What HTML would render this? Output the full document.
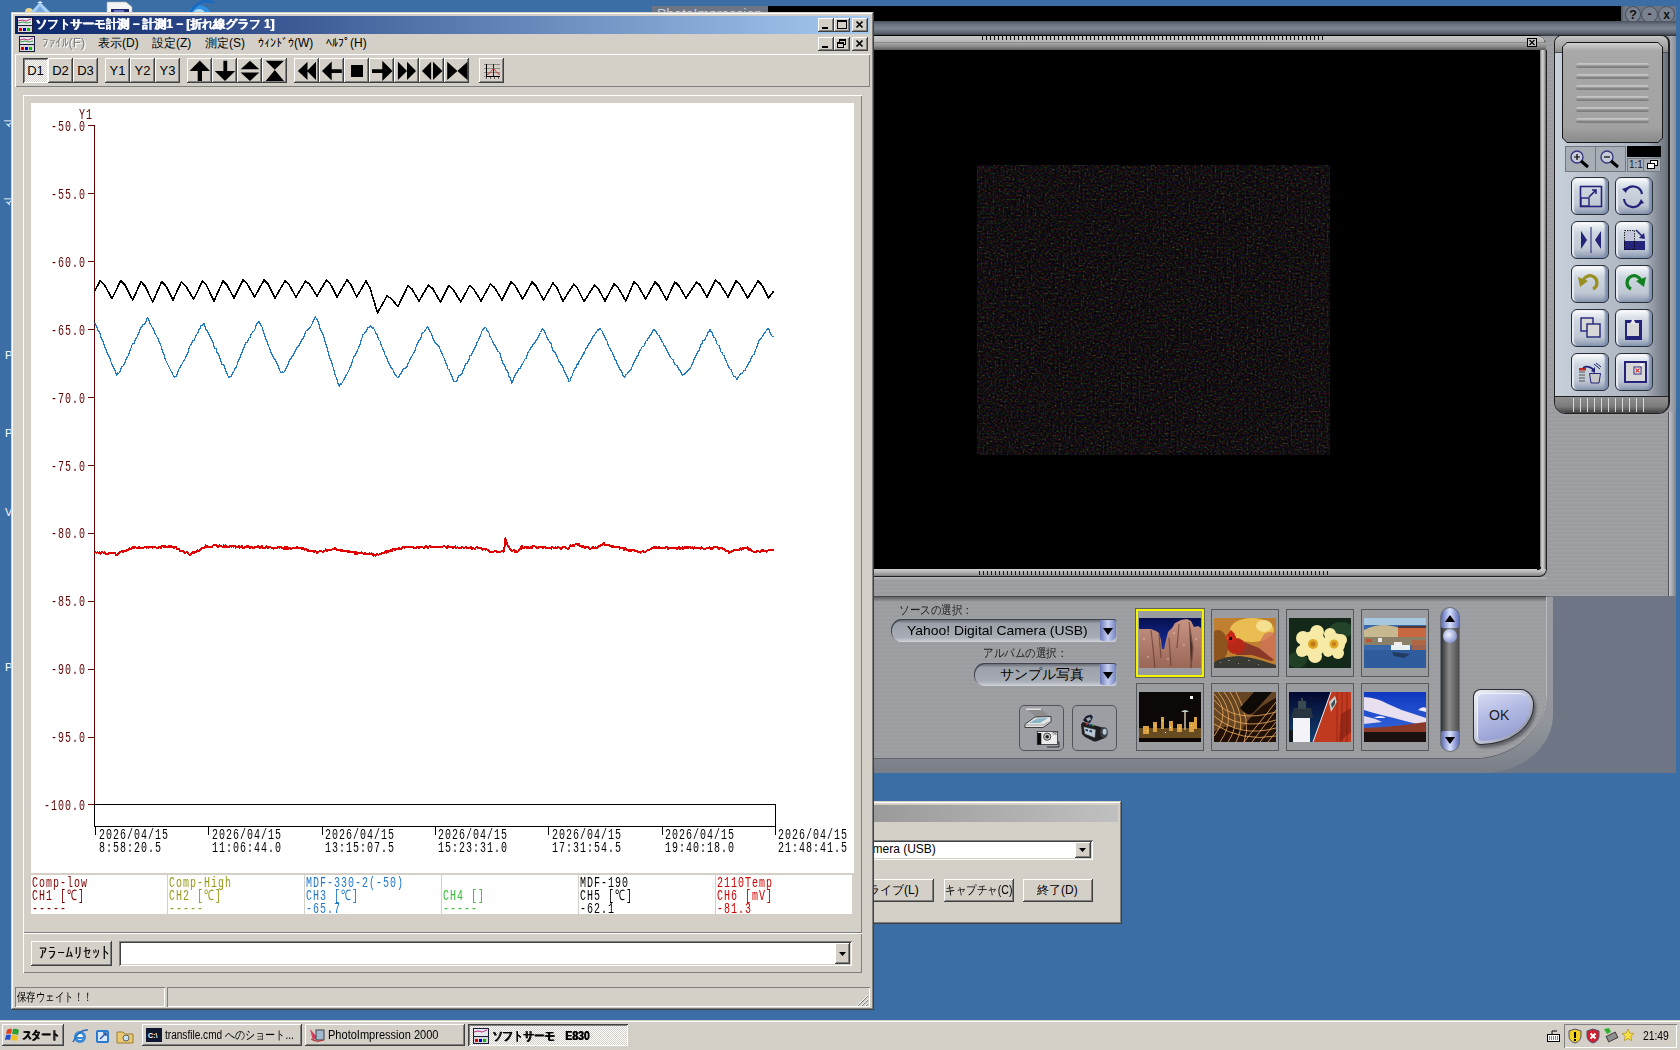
<!DOCTYPE html>
<html><head><meta charset="utf-8">
<style>
*{box-sizing:border-box}
html,body{margin:0;padding:0}
body{width:1680px;height:1050px;overflow:hidden;background:#3A6EA5;position:relative;font-family:"Liberation Sans",sans-serif;font-size:12px;color:#000}
div,span,svg{position:absolute}
.face{background:#D4D0C8}
.rz{background:#D4D0C8;box-shadow:inset -1px -1px #404040,inset 1px 1px #fff,inset -2px -2px #808080}
.rz2{background:#D4D0C8;box-shadow:inset -1px -1px #404040,inset 1px 1px #D4D0C8,inset -2px -2px #808080,inset 2px 2px #fff}
.pz{background:#D4D0C8;box-shadow:inset 1px 1px #404040,inset -1px -1px #fff,inset 2px 2px #808080,inset -2px -2px #D4D0C8}
.thin{box-shadow:inset 1px 1px #fff,inset -1px -1px #808080}
.sk{box-shadow:inset 1px 1px #808080,inset -1px -1px #fff}
.sunk{box-shadow:inset 1px 1px #808080,inset -1px -1px #fff,inset 2px 2px #404040,inset -2px -2px #D4D0C8}
.ml{font-family:"Liberation Mono",monospace;font-size:10px;letter-spacing:1px;line-height:8.966px;white-space:pre;transform:scaleY(1.45);transform-origin:0 0}
.mono{font-family:"Liberation Mono",monospace}
.t{white-space:nowrap;line-height:1}
.tb{width:25px;height:25px;text-align:center;line-height:25px;font-size:13px}
.tb svg{left:0;top:0}
.wb{width:16px;height:14px}
.wb svg{left:0;top:0}
</style></head><body>
<!-- desktop icon fragments -->
<svg style="left:20px;top:0" width="36" height="14" viewBox="0 0 36 14"><circle cx="9" cy="12" r="4" fill="#e8d890"/><path d="M11 12 L20 2 L30 12 Z" fill="#a8d0f8"/><path d="M17 3 L20 1 L23 3 Z" fill="#e8f4ff"/><path d="M15 12 L20 6 L25 12 Z" fill="#78a8e0"/></svg>
<svg style="left:106px;top:1px" width="28" height="12" viewBox="0 0 28 12"><path d="M1 1 H20 L26 6 V12 H1 Z" fill="#f4f4f4" stroke="#b0b0b0" stroke-width="0.6"/><rect x="5" y="8" width="18" height="4" fill="#20286a"/><rect x="8" y="9" width="10" height="2" fill="#6878c8"/></svg>
<svg style="left:184px;top:0" width="34" height="14" viewBox="0 0 34 14"><ellipse cx="15" cy="14" rx="11" ry="9" fill="#2e90e0"/><ellipse cx="15" cy="14" rx="6" ry="5" fill="#a8d8ff"/><path d="M6 12 Q18 -4 30 3" stroke="#1a6ac0" stroke-width="2.5" fill="none"/></svg>
<div class="t" style="left:3px;top:118px;color:#fff;font-size:11px">マ</div>
<div class="t" style="left:3px;top:196px;color:#fff;font-size:11px">マ</div>
<div class="t" style="left:5px;top:350px;color:#fff;font-size:11px">P</div>
<div class="t" style="left:5px;top:428px;color:#fff;font-size:11px">P</div>
<div class="t" style="left:5px;top:507px;color:#fff;font-size:11px">V</div>
<div class="t" style="left:5px;top:662px;color:#fff;font-size:11px">P</div>

<!-- PhotoImpression window -->
<div style="left:652px;top:6px;width:1024px;height:767px;background:#6e7585"></div>
<div class="t" style="left:657px;top:7px;color:#c8ccd4;font-size:14px">PhotoImpression</div>
<div style="left:768px;top:6px;width:855px;height:16px;background:#000;border-right:2px solid #5a6270;border-bottom:1px solid #5a6270"></div>
<!-- round title buttons -->
<div style="left:1625px;top:6px;width:16px;height:17px;border-radius:50%;border:1px solid #4a5060;background:#7a8290;color:#111;font-size:13px;font-weight:bold;text-align:center;line-height:16px">?</div>
<div style="left:1641px;top:6px;width:17px;height:17px;border-radius:50%;border:1px solid #4a5060;background:#7a8290;color:#111;font-size:12px;font-weight:bold;text-align:center;line-height:15px">-</div>
<div style="left:1658px;top:6px;width:17px;height:17px;border-radius:50%;border:1px solid #4a5060;background:#7a8290;color:#111;font-size:12px;font-weight:bold;text-align:center;line-height:16px">x</div>
<!-- upper body -->
<div style="left:652px;top:22px;width:1024px;height:574px;background:repeating-linear-gradient(to bottom,#9ea0a4 0 2px,#9a9ca0 2px 4px)"></div>
<div style="left:652px;top:21px;width:1024px;height:15px;background:linear-gradient(to bottom,#4a5260 0,#6c7582 25%,#7c8591 50%,#5c6470 80%,#30343c 100%)"></div>

<!-- preview panel -->
<div style="left:652px;top:35px;width:894px;height:542px;background:#000;border-radius:0 10px 10px 0"></div>
<div style="left:652px;top:36px;width:893px;height:7px;background:linear-gradient(to bottom,#c8c8c8,#b4b4b4);border-radius:0 9px 0 0"></div>
<div style="left:652px;top:42px;width:894px;height:1px;background:#8a8a8a"></div>
<div style="left:652px;top:43px;width:894px;height:7px;background:linear-gradient(to bottom,#a8a8a8,#8a8a8a 50%,#5a5a5a)"></div>
<div style="left:982px;top:36px;width:344px;height:4px;background:repeating-linear-gradient(to right,#111 0 1px,transparent 1px 4px)"></div>
<div style="left:1527px;top:38px;width:10px;height:9px;border:1px solid #000;background:#c8c8c8"><svg style="left:0;top:0" width="8" height="7"><path d="M1.5 1 L6.5 6 M6.5 1 L1.5 6" stroke="#000" stroke-width="1.2"/></svg></div>
<div style="left:1540px;top:50px;width:7px;height:520px;background:linear-gradient(to right,#707070,#d8d8d8 35%,#b0b0b0 70%,#606060);border-right:1px solid #202020"></div>
<div style="left:652px;top:569px;width:895px;height:8px;background:linear-gradient(to bottom,#d0d0d0,#b0b0b0 50%,#808080);border-right:1px solid #202020;border-bottom:1px solid #202020;border-radius:0 0 8px 0"></div><div style="left:1537px;top:567px;width:4px;height:3px;background:#000;border-radius:0 0 3px 0"></div>
<div style="left:979px;top:571px;width:350px;height:4px;background:repeating-linear-gradient(to right,#111 0 1px,transparent 1px 4px)"></div>
<svg style="left:977px;top:165px" width="353" height="290"><filter id="nz" x="0" y="0" width="100%" height="100%" color-interpolation-filters="sRGB"><feTurbulence type="fractalNoise" baseFrequency="0.5" numOctaves="2" seed="3"/><feComponentTransfer><feFuncR type="gamma" amplitude="0.75" exponent="3.5" offset="0"/><feFuncG type="gamma" amplitude="0.6" exponent="3.5" offset="0"/><feFuncB type="gamma" amplitude="0.7" exponent="3.5" offset="0"/><feFuncA type="linear" slope="0" intercept="1"/></feComponentTransfer></filter><rect width="353" height="290" fill="#000"/><rect width="353" height="290" filter="url(#nz)"/></svg>
<div style="left:652px;top:596px;width:894px;height:1px;background:#45474b"></div>
<div style="left:652px;top:577px;width:894px;height:3px;background:linear-gradient(to bottom,#b4b6ba,transparent)"></div>

<!-- bottom panel -->
<div style="left:652px;top:597px;width:901px;height:176px;background:linear-gradient(to bottom,#9a9ca2,#92969c 70%,#7a7e88);border-radius:0 0 70px 0/0 0 58px 0"></div>
<div style="left:652px;top:597px;width:894px;height:161px;background:repeating-linear-gradient(to bottom,#9ea0a4 0 2px,#9a9ca0 2px 4px);border-radius:0 0 72px 0/0 0 65px 0;box-shadow:0 1px #60646a,1px 0 #b8bac0"></div>
<div style="left:652px;top:597px;width:894px;height:5px;background:linear-gradient(to bottom,#606266,transparent)"></div>

<!-- source selection -->
<div class="t" style="left:899px;top:604px;color:#202020;font-size:12px;transform:scaleX(0.88);transform-origin:0 0">ソースの選択：</div>
<div style="left:891px;top:619px;width:226px;height:23px;border-radius:11px 4px 4px 11px;background:linear-gradient(to bottom,#5a5e66,#9ca0a8 20%,#a8acb4 80%,#d0d4da);box-shadow:inset 1px 1px #404450"></div>
<div class="t" style="left:907px;top:624px;color:#000;font-size:13px;transform:scaleX(1.07);transform-origin:0 0">Yahoo! Digital Camera (USB)</div>
<div style="left:1100px;top:620px;width:16px;height:21px;border-radius:0 3px 6px 3px;background:linear-gradient(to right,#6a78b8,#c8d0f0 50%,#7080c0)"><svg style="left:0;top:0" width="16" height="21"><path d="M3 8 H13 L8 15 Z" fill="#000"/></svg></div>
<div class="t" style="left:983px;top:647px;color:#202020;font-size:12px;transform:scaleX(0.875);transform-origin:0 0">アルバムの選択：</div>
<div style="left:974px;top:663px;width:143px;height:23px;border-radius:11px 4px 4px 11px;background:linear-gradient(to bottom,#5a5e66,#9ca0a8 20%,#a8acb4 80%,#d0d4da);box-shadow:inset 1px 1px #404450"></div>
<div class="t" style="left:1000px;top:667px;color:#000;font-size:14px">サンプル写真</div>
<div style="left:1100px;top:664px;width:16px;height:21px;border-radius:0 3px 6px 3px;background:linear-gradient(to right,#6a78b8,#c8d0f0 50%,#7080c0)"><svg style="left:0;top:0" width="16" height="21"><path d="M3 8 H13 L8 15 Z" fill="#000"/></svg></div>
<!-- scanner / camcorder buttons -->
<div style="left:1019px;top:705px;width:45px;height:46px;border:1px solid #50545a;border-radius:5px;background:#9c9ea4"></div>
<svg style="left:1022px;top:708px" width="40" height="42" viewBox="0 0 40 42"><path d="M4 1.2 H19 L28.7 8.9 H14.8 Z" fill="#8c8c8c"/><path d="M4 1.2 H19" stroke="#f4f4f4" stroke-width="1.2"/><path d="M3 16.3 L13 9 L29 8.5 V14 L21 19.5 H3 Z" fill="#e4e4e4" stroke="#202020" stroke-width="0.8"/><path d="M7 15 L15 10.5 L26 10 L18 15 Z" fill="#8ab8c8"/><path d="M3 17 H21 L29 13" stroke="#909090" stroke-width="0.8" fill="none"/><rect x="15.3" y="23.5" width="20.3" height="13" fill="#ececec" stroke="#303030" stroke-width="0.8"/><rect x="15.3" y="25" width="4" height="11.6" fill="#0a0a0a"/><circle cx="25.2" cy="28.7" r="3.6" fill="#d0d0d0" stroke="#202020" stroke-width="0.8"/><circle cx="25.2" cy="28.7" r="1.8" fill="#202020"/><rect x="31" y="24.5" width="1.5" height="2" fill="#fff" stroke="#505050" stroke-width="0.5"/><rect x="33.5" y="24.5" width="1.5" height="2" fill="#fff" stroke="#505050" stroke-width="0.5"/><path d="M35.6 34 H37 V39 H25" stroke="#202020" stroke-width="0.9" fill="none"/></svg>
<div style="left:1072px;top:705px;width:45px;height:46px;border:1px solid #50545a;border-radius:5px;background:#9c9ea4"></div>
<svg style="left:1077px;top:712px" width="36" height="32" viewBox="0 0 36 32"><path d="M4 12 L6 10 L20 14 L27 16 L28 26 L19 29.5 L17 29.5 L8 25 L5 22 Z" fill="#1e1e1e"/><path d="M6.5 14.5 L19 17.5 L18 26 L7.5 22 Z" fill="#b8c4d0" stroke="#202020" stroke-width="0.6"/><path d="M8.5 17 L11 17.6 L11 19.4 L8.5 18.8 Z M12.5 18 L15 18.6 L15 20.4 L12.5 19.8 Z" fill="#203a70"/><ellipse cx="27" cy="20.5" rx="3.8" ry="5.5" fill="#3a4048"/><ellipse cx="27.6" cy="19.8" rx="2" ry="3" fill="#b8c8d8"/><path d="M6 8 L9 4 L14 2.5 L16 5 L13 11 L8 10 Z" fill="#1a2030"/><path d="M9 6.5 L13 5 L14 7.5 L11 9.5 Z" fill="#a0a8b0"/><circle cx="10" cy="12" r="1" fill="#d03030"/><circle cx="13" cy="12.8" r="1" fill="#3060d0"/><circle cx="16" cy="13.6" r="1" fill="#30a030"/></svg>
<!-- thumbnails -->
<div style="left:1136px;top:609px;width:68px;height:68px;border:2px solid #f4f400;background:#9a9ca0;box-shadow:0 0 0 1px #606458"></div>
<svg style="left:1139px;top:618px" width="62" height="50" viewBox="0 0 62 50"><defs><linearGradient id="rk" x1="0" y1="0" x2="0" y2="1"><stop offset="0" stop-color="#c89484"/><stop offset="1" stop-color="#9a6656"/></linearGradient><linearGradient id="sk1" x1="0" y1="0" x2="0" y2="1"><stop offset="0" stop-color="#061050"/><stop offset="1" stop-color="#1830a0"/></linearGradient></defs><rect width="62" height="50" fill="url(#rk)"/><path d="M0 0 H62 V10 L59 8 L55 9 L52 3 L48 1 L42 2 L36 5 L33 10 L29 14 L27 22 L25 31 L23 31 L22 22 L20 15 L17 13 L12 11 L8 11 L0 11 Z" fill="url(#sk1)"/><path d="M12 12 L14 30 L16 50 M20 16 L22 40 M40 6 L38 30 M50 4 L54 30 L52 50 M30 20 L32 48" stroke="#5a3028" stroke-width="1.2" opacity="0.6"/><g fill="#e8b8a8" opacity="0.5"><rect x="4" y="20" width="2" height="2"/><rect x="34" y="14" width="2" height="2"/><rect x="44" y="26" width="2" height="2"/><rect x="8" y="38" width="2" height="2"/><rect x="28" y="40" width="2" height="2"/><rect x="56" y="20" width="2" height="2"/></g></svg>
<div style="left:1211px;top:609px;width:68px;height:68px;border:1px solid #55585c;background:#9a9ca0"></div>
<svg style="left:1214px;top:618px" width="62" height="50" viewBox="0 0 62 50"><rect width="62" height="50" fill="#c08030"/><ellipse cx="38" cy="12" rx="22" ry="12" fill="#f0c858" opacity="0.85"/><ellipse cx="50" cy="8" rx="8" ry="6" fill="#f8e8a0" opacity="0.8"/><ellipse cx="4" cy="28" rx="10" ry="16" fill="#6a3810" opacity="0.6"/><ellipse cx="56" cy="28" rx="10" ry="14" fill="#d07060" opacity="0.7"/><path d="M25 22 L45 30 L60 42 L57 43 L38 37 L22 37 Z" fill="#8a3828"/><ellipse cx="22" cy="28" rx="9" ry="8" fill="#b82818"/><circle cx="17" cy="20" r="5" fill="#c82818"/><path d="M13 17 L17 12 L21 16 Z" fill="#c82818"/><path d="M12 20 L15 19 L14 22 Z" fill="#f06020"/><rect x="15" y="19" width="3" height="3" fill="#201010"/><path d="M0 44 Q10 38 26 38 Q42 40 62 47 V50 H0 Z" fill="#3a3a34"/><g fill="#8a8a80"><rect x="6" y="44" width="1" height="1"/><rect x="14" y="42" width="2" height="1"/><rect x="24" y="45" width="1" height="1"/><rect x="34" y="42" width="2" height="1"/><rect x="44" y="46" width="1" height="1"/></g></svg>
<div style="left:1286px;top:609px;width:68px;height:68px;border:1px solid #55585c;background:#9a9ca0"></div>
<svg style="left:1289px;top:618px" width="62" height="50" viewBox="0 0 62 50"><rect width="62" height="50" fill="#14281a"/><ellipse cx="52" cy="12" rx="12" ry="8" fill="#2a5030" opacity="0.7"/><ellipse cx="8" cy="42" rx="10" ry="8" fill="#244a2a" opacity="0.7"/><g fill="#f6eaa6"><circle cx="24" cy="26" r="13"/><circle cx="14" cy="20" r="7"/><circle cx="28" cy="14" r="7"/><circle cx="34" cy="26" r="6"/><circle cx="26" cy="38" r="7"/><circle cx="13" cy="33" r="6"/><circle cx="45" cy="26" r="11"/><circle cx="41" cy="16" r="6"/><circle cx="52" cy="22" r="6"/><circle cx="49" cy="35" r="6"/><circle cx="39" cy="34" r="5"/></g><circle cx="24" cy="26" r="5" fill="#e0a828"/><circle cx="45" cy="26" r="4.5" fill="#e0a828"/><circle cx="24" cy="26" r="2.5" fill="#c07818"/><circle cx="45" cy="26" r="2" fill="#c07818"/></svg>
<div style="left:1361px;top:609px;width:68px;height:68px;border:1px solid #55585c;background:#9a9ca0"></div>
<svg style="left:1364px;top:618px" width="62" height="50" viewBox="0 0 62 50"><rect width="62" height="50" fill="#3a68a8"/><rect width="62" height="7" fill="#a8c8e0"/><path d="M0 12 Q14 5 28 8 L36 10 V20 H0 Z" fill="#c8b890"/><rect x="34" y="8" width="28" height="12" fill="#c86840"/><rect x="34" y="8" width="28" height="2" fill="#503838"/><rect x="0" y="19" width="62" height="8" fill="#8a8068"/><rect x="2" y="21" width="6" height="3" fill="#c05030"/><rect x="14" y="20" width="4" height="4" fill="#e8e8e8"/><rect x="48" y="22" width="14" height="10" fill="#b8603a" opacity="0.8"/><path d="M27 27 H46 V32 H27 Z" fill="#e8f0f0"/><path d="M30 24 H38 V28 H30 Z" fill="#f0f0f0"/><rect x="0" y="32" width="62" height="18" fill="#2f5c9c"/><path d="M28 34 L46 36 L40 40 L30 38 Z" fill="#203a60"/></svg>
<div style="left:1136px;top:683px;width:68px;height:68px;border:1px solid #55585c;background:#9a9ca0"></div>
<svg style="left:1139px;top:692px" width="62" height="50" viewBox="0 0 62 50"><rect width="62" height="50" fill="#0c0808"/><rect x="51" y="4" width="3" height="3" fill="#fff"/><path d="M42 20 Q46 16 50 20 Z" fill="#c0d0c0"/><rect x="45" y="20" width="2" height="18" fill="#a09080"/><g fill="#d8a040"><rect x="0" y="36" width="62" height="10" opacity="0.45"/><rect x="22" y="25" width="3" height="12"/><rect x="14" y="30" width="4" height="10"/><rect x="30" y="29" width="4" height="10"/><rect x="55" y="25" width="3" height="12"/><rect x="50" y="30" width="5" height="10"/><rect x="38" y="32" width="5" height="8"/><rect x="4" y="34" width="6" height="8"/></g><g fill="#fff0b0"><rect x="16" y="33" width="1" height="1"/><rect x="23" y="28" width="1" height="1"/><rect x="31" y="35" width="1" height="1"/><rect x="52" y="33" width="1" height="1"/><rect x="8" y="38" width="1" height="1"/><rect x="40" y="36" width="1" height="1"/><rect x="26" y="40" width="1" height="1"/></g></svg>
<div style="left:1211px;top:683px;width:68px;height:68px;border:1px solid #55585c;background:#9a9ca0"></div>
<svg style="left:1214px;top:692px" width="62" height="50" viewBox="0 0 62 50"><rect width="62" height="50" fill="#201008"/><g stroke="#f0b060" stroke-width="0.8" fill="none"><path d="M0 2 Q18 20 0 44 M4 0 Q24 24 6 50 M10 0 Q30 26 14 50 M16 0 Q34 28 22 50 M22 0 Q38 30 30 50 M0 8 Q20 32 62 20 M0 16 Q24 40 62 28 M0 24 Q26 46 62 36 M0 32 Q28 50 62 44 M30 50 L62 10 M38 50 L62 18 M46 50 L62 30 M54 50 L62 40"/></g><path d="M0 0 H62 V6 Q40 16 28 38 Q14 30 0 40 Z" fill="#e8a858" opacity="0.35"/><path d="M26 16 L40 0 H58 L40 20 Q34 26 26 16 Z" fill="#0e0a08"/></svg>
<div style="left:1286px;top:683px;width:68px;height:68px;border:1px solid #55585c;background:#9a9ca0"></div>
<svg style="left:1289px;top:692px" width="62" height="50" viewBox="0 0 62 50"><defs><linearGradient id="nv" x1="0" y1="0" x2="0" y2="1"><stop offset="0" stop-color="#040830"/><stop offset="1" stop-color="#104070"/></linearGradient></defs><rect width="62" height="50" fill="url(#nv)"/><path d="M24 50 L42 0 H62 V50 Z" fill="#c03a20"/><path d="M24 50 L42 0" stroke="#f0f0f0" stroke-width="1"/><path d="M40 10 L46 4 L48 10 L42 20 Z" fill="#c8d0d0"/><path d="M42 12 L46 7 L46 12 L43 16 Z" fill="#405050"/><g stroke="#801c10" stroke-width="0.6"><path d="M48 0 V50 M53 0 V50 M58 0 V50"/></g><path d="M52 22 L62 16 V40 L50 50 Z" fill="#701810" opacity="0.5"/><rect x="4" y="25" width="17" height="25" fill="#f4f4f8"/><path d="M2 26 H24 L22 16 H5 Z" fill="#283440"/><rect x="9" y="9" width="8" height="8" fill="#3a4850"/><rect x="12" y="6" width="2" height="3" fill="#3a4850"/><rect x="0" y="38" width="4" height="12" fill="#101820"/></svg>
<div style="left:1361px;top:683px;width:68px;height:68px;border:1px solid #55585c;background:#9a9ca0"></div>
<svg style="left:1364px;top:692px" width="62" height="50" viewBox="0 0 62 50"><defs><linearGradient id="bs" x1="0" y1="0" x2="0" y2="1"><stop offset="0" stop-color="#1038c0"/><stop offset="1" stop-color="#3a70e0"/></linearGradient></defs><rect width="62" height="50" fill="url(#bs)"/><path d="M0 5 Q14 6 24 12 Q36 18 50 22 L62 26 V34 Q44 30 30 26 Q12 22 0 18 Z" fill="#e8e0f0"/><path d="M0 24 Q10 26 18 30 L0 32 Z" fill="#e0d8f0"/><path d="M10 26 Q16 22 22 26 Z" fill="#f0e8ff"/><path d="M54 18 Q58 14 62 16 V20 Z" fill="#f0e8ff"/><path d="M0 36 L20 35 L40 33 L62 30 V40 H0 Z" fill="#8a3828"/><rect x="0" y="40" width="62" height="10" fill="#1a1010"/></svg>
<!-- scrollbar -->
<div style="left:1441px;top:608px;width:18px;height:143px;border-radius:9px;background:linear-gradient(to right,#303030,#8a8a8a 45%,#505050);box-shadow:0 0 0 1px #6a6e76"></div>
<div style="left:1441px;top:608px;width:18px;height:20px;border-radius:9px 9px 2px 2px;background:linear-gradient(to right,#5a68b0,#d8e0ff 50%,#6070b8)"><svg style="left:0;top:0" width="18" height="20"><path d="M4 14 H14 L9 7 Z" fill="#000"/></svg></div>
<div style="left:1443px;top:629px;width:14px;height:14px;border-radius:50%;background:radial-gradient(circle at 40% 40%,#f0f4ff,#6070b8)"></div>
<div style="left:1441px;top:731px;width:18px;height:20px;border-radius:2px 2px 9px 9px;background:linear-gradient(to right,#5a68b0,#d8e0ff 50%,#6070b8)"><svg style="left:0;top:0" width="18" height="20"><path d="M4 6 H14 L9 13 Z" fill="#000"/></svg></div>
<!-- OK -->
<div style="left:1473px;top:689px;width:61px;height:56px;border-radius:8px 14px 56px 8px/8px 16px 42px 8px;background:#2a2c34;box-shadow:2px 3px 3px rgba(40,40,50,0.5)"></div>
<div style="left:1474px;top:690px;width:59px;height:54px;border-radius:7px 13px 54px 7px/7px 15px 40px 7px;background:linear-gradient(135deg,#f0f2f8,#b8bccc 60%,#707480)"></div>
<div style="left:1477px;top:693px;width:53px;height:48px;border-radius:5px 11px 48px 5px/5px 13px 36px 5px;background:linear-gradient(160deg,#d8dcf4 0,#b4bce4 40%,#8a94cc 100%);box-shadow:inset 1px 1px #f0f0ff"></div>
<div class="t" style="left:1489px;top:708px;font-size:14px;color:#202020">OK</div>

<!-- right toolbar -->
<div style="left:1554px;top:35px;width:116px;height:379px;border:1px solid #202020;border-right-width:2px;border-radius:8px 8px 12px 12px;background:linear-gradient(to right,#c8d0da,#b8c0cc 40%,#a8b0bc 80%,#6a707a)"></div>
<div style="left:1555px;top:36px;width:113px;height:17px;border-radius:7px 7px 0 0;background:linear-gradient(to bottom,#c8c8c8,#b4b4b4 30%,#a4a4a4 70%,#8a8a8a);border-bottom:1px solid #505050"></div>
<div style="left:1562px;top:42px;width:101px;height:101px;background:#151515;clip-path:polygon(5px 0,calc(100% - 5px) 0,100% 5px,100% calc(100% - 5px),calc(100% - 5px) 100%,5px 100%,0 calc(100% - 5px),0 5px)"></div>
<div style="left:1563px;top:43px;width:99px;height:99px;background:linear-gradient(to bottom,#d0d0d0 0,#a8a8a8 8%,#a2a2a2 85%,#8a8a8a);clip-path:polygon(4px 0,calc(100% - 4px) 0,100% 4px,100% calc(100% - 4px),calc(100% - 4px) 100%,4px 100%,0 calc(100% - 4px),0 4px)"></div>
<div style="left:1576px;top:63px;width:73px;height:5px;border-radius:2.5px;background:linear-gradient(to bottom,#cacaca 0,#b8b8b8 35%,#8a8a8a 60%,#7a7a7a 100%)"></div><div style="left:1576px;top:74px;width:73px;height:5px;border-radius:2.5px;background:linear-gradient(to bottom,#cacaca 0,#b8b8b8 35%,#8a8a8a 60%,#7a7a7a 100%)"></div><div style="left:1576px;top:85px;width:73px;height:5px;border-radius:2.5px;background:linear-gradient(to bottom,#cacaca 0,#b8b8b8 35%,#8a8a8a 60%,#7a7a7a 100%)"></div><div style="left:1576px;top:96px;width:73px;height:5px;border-radius:2.5px;background:linear-gradient(to bottom,#cacaca 0,#b8b8b8 35%,#8a8a8a 60%,#7a7a7a 100%)"></div><div style="left:1576px;top:107px;width:73px;height:5px;border-radius:2.5px;background:linear-gradient(to bottom,#cacaca 0,#b8b8b8 35%,#8a8a8a 60%,#7a7a7a 100%)"></div><div style="left:1576px;top:118px;width:73px;height:5px;border-radius:2.5px;background:linear-gradient(to bottom,#cacaca 0,#b8b8b8 35%,#8a8a8a 60%,#7a7a7a 100%)"></div>
<div style="left:1565px;top:146px;width:61px;height:26px;border:1px solid #707880;background:#a8aeb6"></div>
<div style="left:1595px;top:146px;width:1px;height:26px;background:#707880"></div>
<svg style="left:1569px;top:149px" width="22" height="20"><circle cx="8" cy="8" r="6" fill="#c8ccd8" stroke="#383880" stroke-width="1.4"/><path d="M5 8h6M8 5v6" stroke="#000" stroke-width="1.2"/><path d="M12 12 L19 18" stroke="#000" stroke-width="3"/></svg>
<svg style="left:1599px;top:149px" width="22" height="20"><circle cx="8" cy="8" r="6" fill="#c8ccd8" stroke="#383880" stroke-width="1.4"/><path d="M5 8h6" stroke="#000" stroke-width="1.2"/><path d="M12 12 L19 18" stroke="#000" stroke-width="3"/></svg>
<div style="left:1627px;top:146px;width:34px;height:11px;background:#000"></div>
<div style="left:1627px;top:158px;width:34px;height:14px;border:1px solid #707880;background:#a8aeb6"></div>
<div style="left:1643px;top:158px;width:1px;height:14px;background:#707880"></div>
<div class="t" style="left:1629px;top:160px;font-size:10px;color:#202020">1:1</div>
<svg style="left:1646px;top:160px" width="13" height="10"><rect x="4.5" y="0.5" width="7" height="5" fill="#fff" stroke="#000"/><rect x="1.5" y="3.5" width="7" height="5" fill="#fff" stroke="#000"/></svg>
<div style="left:1668px;top:412px;width:8px;height:184px;background:linear-gradient(to right,#505458 0,#505458 1px,#c4c8ce 1px,#a0a4aa 60%,#7e8288)"></div><div style="left:1670px;top:36px;width:6px;height:376px;background:linear-gradient(to right,#a8acb2,#8a8e94)"></div>
<!-- big buttons -->
<div style="left:1571px;top:177px;width:38px;height:38px;border-radius:6px;border:1px solid #283038;background:linear-gradient(to bottom,#ffffff 0,#eef2f6 8%,#cdd5df 30%,#c0c8d4 75%,#8a98b0);box-shadow:inset -3px -1px 2px #8090b0,inset 2px 0 1px #e8ecf0"></div>
<div style="left:1615px;top:177px;width:38px;height:38px;border-radius:6px;border:1px solid #283038;background:linear-gradient(to bottom,#ffffff 0,#eef2f6 8%,#cdd5df 30%,#c0c8d4 75%,#8a98b0);box-shadow:inset -3px -1px 2px #8090b0,inset 2px 0 1px #e8ecf0"></div>
<div style="left:1571px;top:221px;width:38px;height:38px;border-radius:6px;border:1px solid #283038;background:linear-gradient(to bottom,#ffffff 0,#eef2f6 8%,#cdd5df 30%,#c0c8d4 75%,#8a98b0);box-shadow:inset -3px -1px 2px #8090b0,inset 2px 0 1px #e8ecf0"></div>
<div style="left:1615px;top:221px;width:38px;height:38px;border-radius:6px;border:1px solid #283038;background:linear-gradient(to bottom,#ffffff 0,#eef2f6 8%,#cdd5df 30%,#c0c8d4 75%,#8a98b0);box-shadow:inset -3px -1px 2px #8090b0,inset 2px 0 1px #e8ecf0"></div>
<div style="left:1571px;top:265px;width:38px;height:38px;border-radius:6px;border:1px solid #283038;background:linear-gradient(to bottom,#ffffff 0,#eef2f6 8%,#cdd5df 30%,#c0c8d4 75%,#8a98b0);box-shadow:inset -3px -1px 2px #8090b0,inset 2px 0 1px #e8ecf0"></div>
<div style="left:1615px;top:265px;width:38px;height:38px;border-radius:6px;border:1px solid #283038;background:linear-gradient(to bottom,#ffffff 0,#eef2f6 8%,#cdd5df 30%,#c0c8d4 75%,#8a98b0);box-shadow:inset -3px -1px 2px #8090b0,inset 2px 0 1px #e8ecf0"></div>
<div style="left:1571px;top:309px;width:38px;height:38px;border-radius:6px;border:1px solid #283038;background:linear-gradient(to bottom,#ffffff 0,#eef2f6 8%,#cdd5df 30%,#c0c8d4 75%,#8a98b0);box-shadow:inset -3px -1px 2px #8090b0,inset 2px 0 1px #e8ecf0"></div>
<div style="left:1615px;top:309px;width:38px;height:38px;border-radius:6px;border:1px solid #283038;background:linear-gradient(to bottom,#ffffff 0,#eef2f6 8%,#cdd5df 30%,#c0c8d4 75%,#8a98b0);box-shadow:inset -3px -1px 2px #8090b0,inset 2px 0 1px #e8ecf0"></div>
<div style="left:1571px;top:353px;width:38px;height:38px;border-radius:6px;border:1px solid #283038;background:linear-gradient(to bottom,#ffffff 0,#eef2f6 8%,#cdd5df 30%,#c0c8d4 75%,#8a98b0);box-shadow:inset -3px -1px 2px #8090b0,inset 2px 0 1px #e8ecf0"></div>
<div style="left:1615px;top:353px;width:38px;height:38px;border-radius:6px;border:1px solid #283038;background:linear-gradient(to bottom,#ffffff 0,#eef2f6 8%,#cdd5df 30%,#c0c8d4 75%,#8a98b0);box-shadow:inset -3px -1px 2px #8090b0,inset 2px 0 1px #e8ecf0"></div>
<svg style="left:1571px;top:177px" width="82" height="214" viewBox="0 0 82 214">
<!-- r1c1 resize -->
<rect x="9.5" y="9.5" width="21" height="20" fill="none" stroke="#24247a" stroke-width="1.6"/><rect x="10" y="21" width="8" height="8" fill="#c8d0dc" stroke="#24247a" stroke-width="1.4"/><path d="M18 20 L25 13 M21 13 H25 V17" stroke="#24247a" stroke-width="1.6" fill="none"/>
<!-- r1c2 rotate -->
<path d="M55 13 A9 9 0 0 1 71 17 M70 25 A9 9 0 0 1 53 22" stroke="#24247a" stroke-width="2.2" fill="none"/><path d="M51 12 L57 10 L55 16 Z M73 26 L67 28 L70 22 Z" fill="#24247a"/>
<!-- r2c1 mirror -->
<path d="M10 54 L16 63 L10 72 Z M30 54 L24 63 L30 72 Z" fill="#24247a"/><path d="M20 50 V76" stroke="#24247a" stroke-width="1"/>
<!-- r2c2 crop -->
<rect x="53" y="64" width="21" height="9" fill="#24247a"/><rect x="53.5" y="53.5" width="10" height="19" fill="none" stroke="#000" stroke-width="0.8" stroke-dasharray="1.5 1"/><rect x="54" y="54" width="9" height="10" fill="#c4c4dc"/><path d="M65 53 L72 60" stroke="#24247a" stroke-width="1.6"/><path d="M74 62 L68 61 L73 56 Z" fill="#24247a"/>
<!-- r3 undo redo -->
<path d="M12 105 A7 7 0 1 1 22 112" stroke="#989020" stroke-width="3.2" fill="none"/><path d="M7 100 L17 104 L9 110 Z" fill="#989020"/>
<path d="M70 105 A7 7 0 1 0 60 112" stroke="#108020" stroke-width="3.2" fill="none"/><path d="M75 100 L65 104 L73 110 Z" fill="#108020"/>
<!-- r4c1 copy -->
<rect x="10" y="141" width="12" height="13" fill="#d8d8d8" stroke="#24247a" stroke-width="1.4"/><rect x="16" y="147" width="13" height="13" fill="#d8d8d8" stroke="#24247a" stroke-width="1.4"/>
<!-- r4c2 paste -->
<rect x="54" y="143" width="17" height="20" fill="#24247a"/><rect x="56" y="146" width="12" height="13" fill="#d8d8d8"/><path d="M59 147 L62 141 L65 147 Z" fill="#e8e8e8"/>
<!-- r5c1 -->
<path d="M8 195 H14 M8 198 H14 M8 201 H14 M8 204 H14" stroke="#505050" stroke-width="1"/><rect x="8" y="191" width="7" height="2.5" fill="#c02828"/><path d="M12 191 A7 6 0 0 1 23 194" stroke="#24247a" stroke-width="1.8" fill="none"/><path d="M24 190 L24 196 L20 194 Z" fill="#24247a"/><path d="M18.5 196.5 H29.5 L28 206 H20 Z" fill="#c8c8c8" stroke="#24247a"/><path d="M23 187 L29 192 M25 186 L30 190" stroke="#24247a" stroke-width="1"/>
<!-- r5c2 -->
<rect x="54" y="185" width="21" height="20" fill="#d8d8d8" stroke="#24247a" stroke-width="2"/><rect x="63" y="190" width="7" height="7" fill="#fff" stroke="#24247a"/><path d="M64.5 191.5 L68.5 195.5 M68.5 191.5 L64.5 195.5" stroke="#d03030" stroke-width="1.2"/><rect x="69" y="187" width="3" height="1.5" fill="#fff"/>
</svg>
<!-- grip -->
<div style="left:1555px;top:397px;width:113px;height:16px;border-radius:0 0 10px 10px;background:linear-gradient(to bottom,#909090,#7a7a7a 60%,#404040);box-shadow:0 -1px #202020"></div>
<div style="left:1573px;top:398px;width:77px;height:14px;background:repeating-linear-gradient(to right,#d8d8d8 0 1px,transparent 1px 7px)"></div>

<!-- capture dialog -->
<div class="rz2" style="left:700px;top:801px;width:422px;height:123px"></div>
<div style="left:704px;top:805px;width:414px;height:17px;background:linear-gradient(to right,#808080,#C0C0C0)"></div>
<div class="sunk" style="left:760px;top:840px;width:333px;height:20px;background:#fff"></div>
<div class="t" style="left:780px;top:843px;font-size:12px">Yahoo! Digital Camera (USB)</div>
<div class="rz" style="left:1075px;top:842px;width:16px;height:16px"><svg style="left:0;top:0" width="16" height="16"><path d="M4 6 H11 L7.5 10 Z" fill="#000"/></svg></div>
<div class="rz" style="left:862px;top:879px;width:72px;height:23px"></div><div class="t" style="left:868px;top:884px">ライブ(L)</div>
<div class="rz" style="left:944px;top:879px;width:70px;height:23px"></div><div class="t" style="left:945px;top:884px;transform:scaleX(0.88);transform-origin:0 0">キャプチャ(C)</div>
<div class="rz" style="left:1023px;top:879px;width:70px;height:23px"></div><div class="t" style="left:1037px;top:884px">終了(D)</div>

<!-- main app window -->
<div class="rz2" style="left:11px;top:12px;width:863px;height:998px"></div>
<div style="left:15px;top:16px;width:855px;height:18px;background:linear-gradient(to right,#0A246A,#A6CAF0)"></div>
<svg style="left:17px;top:17px" width="16" height="16" viewBox="0 0 16 16"><rect x="0" y="0" width="16" height="16" fill="#1a1a3a"/><rect x="1" y="1" width="14" height="7" fill="#e8e8f0"/><path d="M1 4 L5 3 L9 4 L14 2" stroke="#c03080" fill="none"/><path d="M1 6 L6 5 L10 6 L14 5" stroke="#40a040" fill="none"/><rect x="1" y="9" width="14" height="6" fill="#d8d8d8"/><rect x="2" y="11" width="3" height="3" fill="#e00000"/><rect x="6" y="11" width="3" height="3" fill="#0000d0"/><rect x="10" y="11" width="3" height="3" fill="#00c000"/></svg>
<div class="t" style="left:35px;top:18px;color:#fff;font-weight:bold;font-size:12px;text-shadow:0.7px 0 #fff;transform:scaleX(0.98);transform-origin:0 0">ソフトサーモ計測 − 計測1 − [折れ線グラフ 1]</div>
<div class="rz wb" style="left:818px;top:18px"><svg width="16" height="14"><rect x="4" y="9" width="6" height="2" fill="#000"/></svg></div>
<div class="rz wb" style="left:834px;top:18px"><svg width="16" height="14" shape-rendering="crispEdges"><path d="M3.5 2.5 h9 v8 h-9 z" stroke="#000" fill="none"/><rect x="3" y="2" width="10" height="2" fill="#000"/></svg></div>
<div class="rz wb" style="left:852px;top:18px"><svg width="16" height="14"><path d="M4.5 3.5 L10.5 9.5 M10.5 3.5 L4.5 9.5" stroke="#000" stroke-width="1.7"/></svg></div>

<!-- menu bar -->
<svg style="left:19px;top:36px" width="16" height="16" viewBox="0 0 16 16"><rect x="0" y="0" width="16" height="16" fill="#1a1a3a"/><rect x="1" y="1" width="14" height="7" fill="#e8e8f0"/><path d="M1 4 L5 3 L9 4 L14 2" stroke="#c03080" fill="none"/><path d="M1 6 L6 5 L10 6 L14 5" stroke="#40a040" fill="none"/><rect x="1" y="9" width="14" height="6" fill="#d8d8d8"/><rect x="2" y="11" width="3" height="3" fill="#e00000"/><rect x="6" y="11" width="3" height="3" fill="#0000d0"/><rect x="10" y="11" width="3" height="3" fill="#00c000"/></svg>
<div class="t" style="left:42px;top:37px;color:#808080;text-shadow:1px 1px #fff;transform:scaleX(1.1);transform-origin:0 0">ﾌｧｲﾙ(F)</div>
<div class="t" style="left:98px;top:37px">表示(D)</div>
<div class="t" style="left:152px;top:37px">設定(Z)</div>
<div class="t" style="left:205px;top:37px">測定(S)</div>
<div class="t" style="left:258px;top:37px">ｳｨﾝﾄﾞｳ(W)</div>
<div class="t" style="left:326px;top:37px">ﾍﾙﾌﾟ(H)</div>
<div class="rz wb" style="left:818px;top:37px"><svg width="16" height="14"><rect x="4" y="9" width="6" height="2" fill="#000"/></svg></div>
<div class="rz wb" style="left:834px;top:37px"><svg width="16" height="14" shape-rendering="crispEdges"><path d="M5.5 2.5 h6 v5 h-6 z" stroke="#000" fill="none"/><rect x="5" y="2" width="7" height="2" fill="#000"/><path d="M3.5 5.5 h6 v5 h-6 z" stroke="#000" fill="#D4D0C8"/><rect x="3" y="5" width="7" height="2" fill="#000"/></svg></div>
<div class="rz wb" style="left:852px;top:37px"><svg width="16" height="14"><path d="M4.5 3.5 L10.5 9.5 M10.5 3.5 L4.5 9.5" stroke="#000" stroke-width="1.7"/></svg></div>

<!-- toolbar -->
<div style="left:15px;top:54px;width:855px;height:33px;box-shadow:inset 1px 1px #fff,inset -1px -1px #808080"></div>
<div class="tb" style="left:23px;top:58px;background-color:#e8e6e2;background-image:repeating-conic-gradient(#fff 0 25%,#D4D0C8 0 50%);background-size:2px 2px;box-shadow:inset 1px 1px #404040,inset -1px -1px #fff,inset 2px 2px #808080">D1</div>
<div class="tb rz" style="left:48px;top:58px">D2</div>
<div class="tb rz" style="left:73px;top:58px">D3</div>
<div class="tb rz" style="left:105px;top:58px">Y1</div>
<div class="tb rz" style="left:130px;top:58px">Y2</div>
<div class="tb rz" style="left:155px;top:58px">Y3</div>
<div class="tb rz" style="left:187px;top:58px"><svg width="25" height="25"><path d="M2.5 13 L12.8 2.5 L23 13 L15 13 L15 23 L10.7 23 L10.7 13 Z" fill="#000"/></svg></div>
<div class="tb rz" style="left:212px;top:58px"><svg width="25" height="25"><path d="M2.8 13 L13 23 L23.2 13 L15.2 13 L15.2 2.7 L11.4 2.7 L11.4 13 Z" fill="#000"/></svg></div>
<div class="tb rz" style="left:237px;top:58px"><svg width="25" height="25"><path d="M3.6 11.3 L13 2.7 L22.3 11.3 Z M3.6 14.5 L13 23 L22.3 14.5 Z" fill="#000"/></svg></div>
<div class="tb rz" style="left:262px;top:58px"><svg width="25" height="25"><path d="M3.7 2.8 L22 2.8 L12.8 11.8 Z M3.7 23 L22 23 L12.8 12 Z" fill="#000"/></svg></div>
<div class="tb rz" style="left:294px;top:58px"><svg width="25" height="25"><path d="M3.9 12.9 L13.5 3.8 L13.5 22 Z M13 12.9 L22 3.8 L22 22 Z" fill="#000"/></svg></div>
<div class="tb rz" style="left:319px;top:58px"><svg width="25" height="25"><path d="M3 13 L12.7 3.5 L12.7 11.3 L22.8 11.3 L22.8 15 L12.7 15 L12.7 22.5 Z" fill="#000"/></svg></div>
<div class="tb rz" style="left:344px;top:58px"><svg width="25" height="25"><rect x="7" y="7" width="12" height="12" fill="#000"/></svg></div>
<div class="tb rz" style="left:369px;top:58px"><svg width="25" height="25"><path d="M23.5 13 L13.3 2.7 L13.3 11.3 L3 11.3 L3 15 L13.3 15 L13.3 23 Z" fill="#000"/></svg></div>
<div class="tb rz" style="left:394px;top:58px"><svg width="25" height="25"><path d="M3.9 3.8 L13 12.9 L3.9 22 Z M13 3.8 L22 12.9 L13 22 Z" fill="#000"/></svg></div>
<div class="tb rz" style="left:419px;top:58px"><svg width="25" height="25"><path d="M3 12.9 L12.1 3.8 L12.1 22 Z M14 3.8 L23.4 12.9 L14 22 Z" fill="#000"/></svg></div>
<div class="tb rz" style="left:444px;top:58px"><svg width="25" height="25"><path d="M3.2 3.8 L13.4 12.9 L3.2 22 Z M23.5 3.8 L13.4 12.9 L23.5 22 Z" fill="#000"/></svg></div>
<div class="tb rz" style="left:479px;top:58px"><svg width="25" height="25"><g shape-rendering="crispEdges"><path d="M5 6.5 H21 M5 10.5 H21 M5 14.5 H21 M5 18.5 H21" stroke="#8a8a8a"/><path d="M7.5 6 V18.5 H21" stroke="#000" fill="none"/><path d="M7.5 19 v2 M11.5 19 v2 M15.5 19 v2 M19.5 19 v2" stroke="#606060"/><path d="M14.5 6 V18" stroke="#101090" stroke-width="1"/></g><path d="M8 16.6 Q10 16.6 12 13.5 Q14 10.7 14.5 10.7 Q15 10.7 17 13.5 Q19 16.6 21 16.6" stroke="#e03030" fill="none" stroke-width="1"/></svg></div>

<!-- chart panel -->
<div class="thin face" style="left:23px;top:95px;width:839px;height:838px"></div>
<div style="left:31px;top:103px;width:823px;height:770px;background:#fff"></div>
<svg style="left:31px;top:103px" width="823" height="770" viewBox="31 103 823 770">
<g stroke="#600000" stroke-width="1" shape-rendering="crispEdges">
<path d="M94.5 125 V804"/>
<path d="M88 125.5 H94 M88 193.5 H94 M88 261.5 H94 M88 329.5 H94 M88 397.5 H94 M88 465.5 H94 M88 533.5 H94 M88 601.5 H94 M88 669.5 H94 M88 737.5 H94 M88 804.5 H94"/>
</g>
<g stroke="#000" stroke-width="1" fill="none" shape-rendering="crispEdges">
<path d="M94.5 804.5 H775.5 V826.5 H94.5 Z"/>
<path d="M95.5 826 V835 M208.5 826 V835 M322.5 826 V835 M435.5 826 V835 M548.5 826 V835 M662.5 826 V835 M775.5 826 V835"/>
</g>
<polyline fill="none" stroke="#000" stroke-width="1.6" shape-rendering="crispEdges" stroke-linejoin="round" points="94.5,291.3 100.3,280.7 104.4,284.7 112.0,298.7 120.7,280.7 124.9,284.9 132.7,300.0 141.0,281.7 145.1,286.2 152.7,302.0 161.7,281.7 165.7,285.7 173.0,300.0 181.3,282.0 185.6,285.8 193.7,299.3 202.5,281.0 206.5,285.4 214.0,301.0 223.0,281.0 226.8,284.7 234.0,298.0 243.0,280.0 247.1,283.7 254.6,297.0 264.0,280.0 267.9,284.0 275.0,298.0 285.0,281.0 288.9,284.5 296.0,297.0 305.6,281.0 309.6,284.3 317.0,296.0 326.5,280.0 330.2,283.7 337.0,297.0 347.0,280.0 350.4,283.7 356.7,297.0 366.0,281.0 370.0,288.0 377.5,312.7 387.0,296.0 390.9,298.3 398.0,306.5 408.0,285.6 411.9,289.0 419.0,301.0 428.5,285.0 432.7,288.7 440.4,302.0 448.8,285.6 453.0,289.2 460.8,302.0 469.6,285.6 473.6,289.0 481.0,301.0 490.4,284.0 494.5,287.5 502.0,300.0 511.0,282.0 515.1,285.7 522.7,299.0 532.0,282.0 536.0,286.0 543.5,300.0 553.0,283.0 556.5,287.0 563.0,301.0 573.8,284.0 577.3,287.9 584.0,301.6 594.6,285.0 598.2,288.5 605.0,301.0 614.0,284.0 618.1,287.7 625.8,301.0 634.0,282.0 638.1,285.7 645.6,299.0 655.0,282.0 659.0,286.0 666.5,300.0 674.8,282.0 678.7,285.5 686.0,298.0 696.7,282.0 700.3,285.3 707.0,297.0 715.4,280.0 719.8,283.7 728.0,297.0 736.0,281.0 740.1,284.7 747.7,298.0 758.0,281.0 761.7,284.7 768.5,298.0 773.8,291.0"/>
<polyline fill="none" stroke="#1E78C8" stroke-width="1.2" shape-rendering="crispEdges" stroke-linejoin="round" points="94.7,323.3 95.7,324.6 96.7,326.9 97.7,330.1 98.7,330.9 99.7,332.1 100.7,336.7 101.7,339.4 102.7,340.6 103.7,343.7 104.7,346.8 105.7,348.3 106.7,351.6 107.7,354.0 108.7,355.7 109.7,357.5 110.7,361.0 111.7,364.2 112.7,365.7 113.7,368.1 114.7,369.5 115.7,372.6 116.7,375.4 117.7,372.8 118.7,373.4 119.8,372.0 120.8,368.9 121.8,366.8 122.8,366.2 123.8,365.2 124.9,363.3 125.9,359.7 126.9,358.0 127.9,356.1 128.9,354.2 130.0,350.6 131.0,348.1 132.0,344.9 133.0,343.4 134.0,343.3 135.1,340.5 136.1,338.6 137.1,336.7 138.1,334.0 139.1,332.2 140.2,328.9 141.2,327.4 142.2,325.9 143.2,324.3 144.2,324.3 145.3,323.2 146.3,320.5 147.3,317.3 148.3,319.4 149.3,321.4 150.3,324.3 151.3,325.5 152.3,327.7 153.3,328.4 154.3,331.0 155.3,334.4 156.3,335.2 157.3,337.9 158.3,339.1 159.3,342.0 160.3,344.1 161.4,347.0 162.4,350.6 163.4,353.2 164.4,355.7 165.4,359.6 166.4,361.7 167.4,363.8 168.4,365.8 169.4,367.9 170.4,369.8 171.4,371.8 172.4,372.8 173.4,376.3 174.4,377.1 175.4,376.3 176.4,376.1 177.5,373.3 178.5,369.8 179.5,368.2 180.5,366.5 181.5,364.7 182.6,362.9 183.6,361.0 184.6,359.8 185.6,357.7 186.6,355.5 187.7,353.4 188.7,349.7 189.7,346.4 190.7,344.8 191.8,343.2 192.8,340.7 193.8,340.6 194.8,338.7 195.8,336.0 196.9,334.2 197.9,332.5 198.9,329.2 199.9,328.6 200.9,325.6 202.0,325.9 203.0,324.4 204.0,322.9 205.0,326.2 206.0,329.3 207.0,330.7 208.0,332.3 209.0,334.8 210.0,336.5 211.0,338.4 212.0,340.4 213.0,342.5 214.0,346.2 215.0,348.2 216.0,348.7 217.0,352.7 218.0,353.2 219.0,355.7 220.0,358.1 221.0,361.2 222.0,364.2 223.0,364.6 224.0,365.4 225.0,368.6 226.0,371.6 227.0,373.5 228.0,376.1 229.0,377.7 230.0,376.8 231.0,376.5 232.0,374.4 233.0,372.3 234.0,371.0 235.0,368.8 236.0,367.4 237.0,365.1 238.0,361.3 239.0,359.4 240.0,357.5 241.0,354.7 242.0,352.9 243.0,349.5 244.0,347.8 245.0,344.6 246.0,342.4 247.0,342.5 248.0,340.7 249.0,338.1 250.0,337.2 251.0,334.5 252.0,332.9 253.0,331.2 254.0,331.1 255.0,329.2 256.0,325.8 257.0,323.6 258.0,322.3 259.0,321.1 260.0,323.3 261.1,325.5 262.1,327.1 263.1,331.2 264.2,333.6 265.2,337.5 266.2,339.7 267.3,342.1 268.3,345.3 269.3,347.7 270.4,350.1 271.4,353.4 272.4,355.8 273.4,357.4 274.5,359.2 275.5,360.4 276.5,362.5 277.6,364.6 278.6,366.7 279.6,370.3 280.7,372.0 281.7,372.9 282.7,372.0 283.7,372.5 284.8,370.9 285.8,368.6 286.8,367.0 287.8,365.4 288.8,362.2 289.9,360.0 290.9,358.6 291.9,357.0 292.9,355.4 294.0,353.6 295.0,351.8 296.0,349.9 297.0,347.2 298.0,346.2 299.1,345.7 300.1,343.4 301.1,341.1 302.1,339.7 303.1,338.1 304.2,336.5 305.2,332.5 306.2,330.5 307.2,330.1 308.3,329.4 309.3,328.5 310.3,326.8 311.3,325.8 312.3,323.2 313.4,320.8 314.4,318.7 315.4,316.7 316.4,318.9 317.4,319.7 318.4,322.6 319.4,326.4 320.4,329.3 321.4,330.8 322.4,333.5 323.4,335.6 324.4,338.8 325.4,342.9 326.4,346.1 327.4,348.6 328.4,352.8 329.4,356.9 330.4,359.2 331.4,361.8 332.4,364.4 333.4,368.6 334.4,371.8 335.4,375.6 336.4,377.7 337.4,381.3 338.4,384.6 339.4,386.2 340.4,383.6 341.5,384.1 342.5,381.8 343.5,380.3 344.5,378.6 345.6,376.0 346.6,375.0 347.6,372.9 348.6,370.8 349.7,368.5 350.7,366.3 351.7,363.9 352.7,360.0 353.8,356.4 354.8,356.1 355.8,353.8 356.9,351.5 357.9,349.2 358.9,346.9 359.9,344.6 361.0,340.8 362.0,338.0 363.0,334.7 364.0,333.9 365.1,332.2 366.1,331.2 367.1,329.3 368.1,327.4 369.2,327.1 370.2,325.8 371.2,326.3 372.2,327.9 373.2,328.0 374.2,329.2 375.2,331.5 376.2,333.7 377.2,335.1 378.2,338.3 379.2,340.5 380.2,341.1 381.2,345.2 382.2,347.4 383.2,349.6 384.3,352.5 385.3,356.1 386.3,356.3 387.3,359.2 388.3,362.7 389.3,364.3 390.3,366.0 391.3,367.7 392.3,368.7 393.3,370.5 394.3,373.9 395.3,374.5 396.3,376.1 397.3,377.6 398.3,377.7 399.3,376.0 400.3,374.2 401.3,373.2 402.3,370.5 403.3,368.8 404.3,368.5 405.4,368.0 406.4,367.1 407.4,366.1 408.4,362.6 409.4,361.7 410.4,358.3 411.4,357.5 412.4,354.9 413.4,353.3 414.4,352.3 415.4,348.9 416.4,345.9 417.4,343.8 418.4,341.9 419.4,340.0 420.5,338.9 421.5,335.5 422.5,332.4 423.5,332.8 424.5,331.2 425.5,329.8 426.5,328.3 427.5,326.2 428.5,328.8 429.5,330.5 430.6,332.3 431.6,334.1 432.6,337.6 433.6,340.0 434.6,341.6 435.6,343.4 436.7,343.8 437.7,345.3 438.7,346.2 439.7,348.1 440.7,350.9 441.8,352.9 442.8,355.6 443.8,357.5 444.8,360.2 445.8,362.7 446.9,365.2 447.9,369.0 448.9,369.4 449.9,371.7 450.9,374.5 451.9,376.4 453.0,379.7 454.0,381.9 455.0,381.6 456.0,381.7 457.0,380.7 458.0,377.2 459.0,375.6 460.0,375.5 461.0,374.3 462.0,373.7 463.0,370.6 464.0,368.4 465.0,365.5 466.0,363.6 467.0,363.2 468.0,361.7 469.0,359.4 470.0,355.6 471.0,355.2 472.0,353.8 473.0,351.5 474.0,349.3 475.0,347.2 476.0,345.9 477.0,342.2 478.0,341.2 479.0,338.6 480.0,336.2 481.0,334.0 482.0,331.1 483.0,329.4 484.0,328.5 485.0,327.5 486.0,328.0 487.0,330.4 488.0,331.2 489.0,333.0 490.0,336.5 491.0,338.1 492.0,339.9 493.0,342.6 494.0,344.4 495.0,345.5 496.0,347.7 497.0,349.8 498.0,351.3 499.0,352.1 500.0,353.3 501.0,357.7 502.0,360.8 503.0,363.8 504.0,364.3 505.0,366.6 506.0,369.6 507.0,370.8 508.0,372.8 509.0,376.3 510.0,377.2 511.0,380.4 512.0,383.2 513.0,380.5 514.0,377.2 515.0,375.8 516.1,373.5 517.1,372.1 518.1,370.6 519.1,368.2 520.1,368.3 521.1,366.4 522.2,364.5 523.2,362.5 524.2,360.6 525.2,358.7 526.2,358.3 527.2,355.3 528.3,351.7 529.3,350.8 530.3,348.9 531.3,347.1 532.3,346.0 533.4,344.0 534.4,343.7 535.4,341.5 536.4,339.5 537.4,339.1 538.4,337.0 539.5,334.2 540.5,332.5 541.5,330.2 542.5,328.8 543.5,330.5 544.5,330.6 545.6,334.3 546.6,336.0 547.6,339.4 548.6,340.3 549.6,342.2 550.7,342.6 551.7,346.5 552.7,350.0 553.7,351.0 554.7,352.2 555.8,353.7 556.8,356.0 557.8,358.3 558.8,361.4 559.8,361.9 560.8,364.2 561.9,365.0 562.9,367.4 563.9,370.5 564.9,372.6 565.9,374.5 567.0,376.3 568.0,378.1 569.0,381.3 570.0,381.1 571.1,377.6 572.1,375.9 573.1,372.7 574.1,370.5 575.2,368.4 576.2,367.0 577.2,364.0 578.2,364.3 579.3,361.0 580.3,359.6 581.3,358.0 582.3,356.3 583.4,353.0 584.4,353.1 585.4,349.7 586.5,348.1 587.5,346.4 588.5,344.7 589.5,343.0 590.6,341.3 591.6,339.6 592.6,337.1 593.6,336.3 594.7,334.7 595.7,333.0 596.7,331.4 597.7,329.9 598.8,329.9 599.8,328.2 600.8,329.8 601.9,330.7 602.9,333.5 604.0,335.4 605.0,337.5 606.0,339.7 607.1,341.1 608.1,345.1 609.2,347.3 610.2,348.8 611.3,351.3 612.3,352.2 613.3,355.0 614.4,357.7 615.4,360.3 616.5,361.3 617.5,364.8 618.5,366.4 619.6,368.9 620.6,369.7 621.7,371.5 622.7,374.7 623.8,376.8 624.8,377.3 625.8,374.3 626.8,374.6 627.8,372.3 628.8,371.6 629.8,370.6 630.8,369.6 631.8,367.6 632.8,364.9 633.8,363.1 634.8,360.5 635.9,358.9 636.9,356.4 637.9,355.7 638.9,352.4 639.9,350.9 640.9,349.4 641.9,347.1 642.9,346.4 643.9,346.3 644.9,343.6 645.9,341.2 646.9,340.4 648.0,338.8 649.0,337.2 650.0,335.7 651.0,334.2 652.0,332.7 653.0,330.6 654.0,329.4 655.0,330.9 656.0,330.9 657.1,333.5 658.1,335.2 659.1,335.4 660.1,337.5 661.1,339.5 662.1,341.5 663.2,343.5 664.2,346.2 665.2,346.5 666.2,348.6 667.2,350.7 668.2,352.8 669.3,354.8 670.3,356.8 671.3,358.7 672.3,359.1 673.3,359.7 674.4,363.6 675.4,364.8 676.4,365.2 677.4,365.9 678.4,368.2 679.4,370.3 680.5,370.8 681.5,374.4 682.5,375.3 683.5,374.2 684.5,374.6 685.6,372.3 686.6,372.3 687.6,370.5 688.6,370.1 689.6,368.7 690.6,368.0 691.7,365.5 692.7,363.1 693.7,360.0 694.7,357.9 695.7,355.9 696.8,353.9 697.8,351.9 698.8,350.7 699.8,348.6 700.8,345.1 701.9,343.5 702.9,340.3 703.9,340.5 704.9,339.7 705.9,337.2 706.9,335.6 708.0,332.6 709.0,331.5 710.0,328.9 711.0,331.7 712.0,332.1 713.0,335.8 714.0,337.7 715.0,338.0 716.0,340.3 717.0,344.0 718.0,345.1 719.0,345.7 720.0,348.1 721.0,352.1 722.0,352.5 723.0,354.9 724.0,355.7 725.0,358.3 726.0,360.7 727.0,363.1 728.0,365.4 729.0,367.6 730.0,368.9 731.0,369.6 732.0,372.0 733.0,375.0 734.0,376.2 735.0,376.6 736.0,378.0 737.0,380.1 738.0,377.7 739.0,376.1 740.0,374.5 741.1,373.6 742.1,373.3 743.1,372.0 744.1,370.5 745.1,370.4 746.1,367.7 747.2,365.9 748.2,364.0 749.2,362.1 750.2,361.0 751.2,358.2 752.2,356.3 753.3,354.4 754.3,354.0 755.3,350.3 756.3,348.5 757.3,345.1 758.4,342.1 759.4,339.3 760.4,339.1 761.4,337.8 762.4,336.5 763.4,334.4 764.5,333.2 765.5,332.0 766.5,330.0 767.5,329.0 768.5,328.6 769.6,331.0 770.6,334.0 771.7,335.8 772.7,336.7 773.8,336.7"/>
<polyline fill="none" stroke="#E00000" stroke-width="2" shape-rendering="crispEdges" stroke-linejoin="round" points="94.5,553.0 95.5,552.1 96.5,552.7 97.6,552.3 98.6,552.9 99.6,552.5 100.6,553.5 101.7,552.1 102.7,552.2 103.7,552.8 104.7,552.4 105.8,554.0 106.8,554.1 107.8,554.2 108.8,552.8 109.8,553.4 110.9,553.5 111.9,552.5 112.9,553.1 113.9,552.7 115.0,552.8 116.0,554.9 117.0,555.0 118.0,553.6 119.1,553.1 120.1,552.2 121.2,551.3 122.2,550.9 123.3,552.4 124.3,551.0 125.4,551.1 126.4,551.1 127.5,549.7 128.5,549.8 129.6,548.4 130.6,549.4 131.7,548.0 132.7,547.0 133.7,548.0 134.7,547.4 135.7,547.4 136.7,547.9 137.7,547.9 138.8,546.8 139.8,547.8 140.8,547.8 141.8,547.8 142.8,548.2 143.8,547.7 144.8,547.2 145.8,546.7 146.8,547.6 147.8,547.1 148.8,547.6 149.8,547.1 150.8,546.5 151.8,547.5 152.9,547.5 153.9,546.5 154.9,547.4 155.9,547.4 156.9,547.9 157.9,548.4 158.9,546.8 159.9,546.8 160.9,547.8 161.9,546.3 162.9,546.2 163.9,547.2 164.9,546.2 165.9,546.7 167.0,547.1 168.0,547.6 169.0,546.1 170.0,547.1 171.0,546.0 172.0,547.0 173.0,547.0 174.0,548.4 175.0,547.3 176.0,547.2 177.0,549.1 178.0,549.6 179.0,549.0 180.0,550.9 181.0,551.3 182.0,551.2 183.0,551.1 184.0,551.5 185.0,552.9 186.0,552.4 187.0,552.3 188.0,553.2 189.0,554.6 190.0,554.5 191.0,554.5 192.1,552.5 193.1,551.5 194.2,553.0 195.2,552.0 196.3,552.0 197.3,550.5 198.3,551.0 199.4,550.5 200.4,549.5 201.5,548.0 202.5,548.5 203.6,548.0 204.6,547.5 205.7,545.5 206.7,547.0 207.7,546.5 208.7,547.0 209.7,547.1 210.7,547.1 211.7,547.1 212.7,545.6 213.7,545.2 214.7,545.2 215.7,545.2 216.7,545.7 217.7,547.2 218.7,546.3 219.7,545.3 220.7,546.3 221.7,546.3 222.8,546.9 223.8,545.4 224.8,547.4 225.8,545.4 226.8,547.4 227.8,547.0 228.8,547.5 229.8,546.0 230.8,546.5 231.8,546.5 232.8,545.6 233.8,546.6 234.8,545.6 235.8,547.6 236.8,547.2 237.8,547.2 238.8,545.7 239.8,547.7 240.8,547.2 241.8,545.8 242.8,547.8 243.8,547.8 244.8,546.8 245.8,546.9 246.8,545.9 247.8,546.9 248.8,546.4 249.8,547.9 250.8,546.5 251.8,546.5 252.9,548.0 253.9,548.0 254.9,547.1 255.9,547.1 256.9,547.1 257.9,546.1 258.9,547.1 259.9,548.2 260.9,547.2 261.9,546.2 262.9,547.7 263.9,548.3 264.9,548.3 265.9,546.8 266.9,546.3 267.9,547.8 268.9,546.9 269.9,547.4 270.9,547.4 271.9,548.4 272.9,548.5 273.9,548.5 274.9,547.5 275.9,548.0 276.9,548.0 277.9,547.1 278.9,546.6 279.9,547.6 280.9,546.6 281.9,547.6 283.0,547.7 284.0,548.7 285.0,546.7 286.0,548.7 287.0,547.3 288.0,548.8 289.0,547.8 290.0,547.8 291.0,548.8 292.0,548.4 293.0,547.9 294.0,547.9 295.0,547.9 296.0,548.0 297.0,547.0 298.0,548.5 299.0,547.7 300.0,548.5 301.0,547.7 302.0,548.9 303.0,548.2 304.0,549.4 305.0,549.6 306.0,548.9 307.0,550.6 308.0,550.4 309.0,550.6 310.0,550.8 311.0,550.6 312.0,550.8 313.0,550.5 314.0,552.3 315.0,551.0 316.0,551.4 317.0,552.7 318.0,552.1 319.0,551.4 320.0,551.3 321.0,550.6 322.0,551.5 323.0,551.9 324.0,551.2 325.0,550.6 326.0,549.4 327.0,551.3 328.0,550.1 329.0,549.5 330.0,549.9 331.0,549.7 332.0,549.6 333.0,548.4 334.0,548.8 335.0,548.1 336.0,549.0 337.0,550.2 338.0,549.5 339.0,549.8 340.0,550.0 341.0,551.2 342.0,550.0 343.0,550.8 344.0,551.0 345.0,551.2 346.0,551.5 347.0,550.8 348.0,552.0 349.0,551.1 350.0,552.2 351.1,552.3 352.1,552.4 353.1,551.5 354.1,552.1 355.1,553.7 356.1,551.8 357.2,553.9 358.2,553.0 359.2,553.1 360.2,553.2 361.2,552.3 362.2,553.4 363.3,553.6 364.3,554.2 365.3,552.8 366.3,553.9 367.3,554.0 368.3,554.1 369.4,553.2 370.4,554.3 371.4,553.4 372.4,553.5 373.4,555.6 374.4,554.7 375.5,555.8 376.5,554.4 377.5,554.5 378.5,554.6 379.6,554.3 380.6,554.4 381.6,553.6 382.7,552.7 383.7,552.9 384.8,552.5 385.8,551.1 386.8,552.8 387.9,551.4 388.9,551.6 389.9,551.2 391.0,549.9 392.0,551.0 393.1,548.8 394.1,548.6 395.1,550.4 396.2,549.1 397.2,548.9 398.3,549.2 399.4,548.0 400.4,549.3 401.4,548.1 402.5,547.9 403.6,546.6 404.6,547.9 405.6,546.7 406.7,546.5 407.7,547.0 408.7,547.0 409.7,547.0 410.7,547.0 411.7,547.0 412.8,547.0 413.8,548.0 414.8,548.0 415.8,548.0 416.8,547.0 417.8,547.0 418.8,548.0 419.8,546.5 420.8,547.0 421.8,547.0 422.8,547.5 423.9,548.0 424.9,547.0 425.9,546.0 426.9,546.5 427.9,548.0 428.9,546.5 429.9,546.0 430.9,546.5 431.9,547.5 432.9,547.0 433.9,547.5 435.0,546.5 436.0,547.0 437.0,547.0 438.0,547.0 439.0,547.0 440.0,546.5 441.0,547.5 442.0,546.5 443.0,546.6 444.0,546.1 445.0,546.6 446.0,547.1 447.0,547.7 448.0,546.2 449.0,547.2 450.0,546.8 451.0,547.3 452.0,547.3 453.0,547.8 454.0,546.9 455.0,546.4 456.0,548.4 457.0,547.4 458.0,547.5 459.0,547.5 460.0,548.5 461.0,548.0 462.0,547.0 463.0,547.6 464.0,547.6 465.0,547.6 466.0,546.6 467.0,547.7 468.0,547.7 469.0,548.2 470.0,547.8 471.0,547.3 472.0,548.8 473.0,548.3 474.0,548.4 475.0,548.9 476.0,547.4 477.0,546.9 478.0,548.0 479.0,547.5 480.0,548.0 481.0,548.3 482.1,549.7 483.1,549.0 484.2,549.3 485.2,549.7 486.2,549.0 487.3,549.8 488.3,549.7 489.4,551.0 490.4,552.3 491.5,551.7 492.5,552.5 493.5,552.0 494.6,551.0 495.6,551.0 496.7,552.0 497.7,552.5 498.8,552.0 499.8,552.0 500.9,551.5 501.9,551.0 503.0,551.5 504.0,551.5 505.4,538.5 506.6,542.5 507.8,546.0 509.0,547.0 510.1,549.6 511.1,550.2 512.2,550.9 513.2,550.5 514.3,550.1 515.4,552.2 516.4,551.4 517.5,552.0 518.5,551.0 519.6,549.5 520.7,549.0 521.7,546.0 522.7,548.0 523.7,548.0 524.8,547.1 525.8,546.6 526.8,548.1 527.8,547.1 528.8,547.7 529.8,548.2 530.9,547.2 531.9,548.2 532.9,546.2 533.9,546.3 534.9,546.3 535.9,547.3 537.0,547.8 538.0,547.9 539.0,546.9 540.0,547.4 541.0,547.4 542.1,546.9 543.1,548.0 544.1,546.5 545.1,546.5 546.1,548.0 547.1,547.6 548.2,547.6 549.2,547.6 550.2,547.6 551.2,548.6 552.2,547.2 553.3,547.7 554.3,548.2 555.3,547.2 556.3,548.3 557.3,547.3 558.3,546.8 559.4,547.8 560.4,548.8 561.4,548.9 562.4,547.9 563.4,546.9 564.4,546.9 565.5,547.5 566.5,548.0 567.5,549.0 568.5,548.5 569.6,547.0 570.6,545.5 571.6,546.0 572.7,545.0 573.7,546.0 574.8,544.5 575.8,544.0 576.8,543.8 577.8,544.7 578.8,544.0 579.9,546.3 580.9,545.7 581.9,547.0 582.9,546.3 583.9,546.7 585.0,548.0 586.0,547.3 587.0,547.2 588.0,547.0 589.1,548.0 590.2,549.0 591.3,548.5 592.4,547.0 593.4,547.5 594.5,548.0 595.6,547.5 596.7,548.0 597.8,546.8 598.8,546.2 599.9,546.0 600.9,544.8 602.0,544.7 603.0,544.0 604.0,543.2 605.0,545.0 606.0,544.8 607.0,545.5 608.0,544.8 609.0,545.0 610.0,545.8 611.0,546.0 612.0,547.2 613.0,545.5 614.0,547.2 615.0,546.4 616.0,547.2 617.0,546.4 618.0,547.1 619.0,546.9 620.0,548.6 621.0,547.9 622.0,548.6 623.0,547.8 624.0,550.1 625.0,548.3 626.0,549.0 627.0,549.8 628.0,550.0 629.0,551.1 630.1,550.3 631.1,551.4 632.1,549.6 633.2,549.7 634.2,550.4 635.2,551.0 636.3,550.6 637.3,550.8 638.4,552.4 639.4,552.1 640.4,552.7 641.5,551.9 642.5,551.0 643.5,551.7 644.6,552.3 645.6,552.0 646.7,550.7 647.7,550.3 648.8,550.0 649.8,549.7 650.8,548.8 651.9,548.0 652.9,547.7 654.0,547.3 655.0,548.0 656.0,547.0 657.0,548.0 658.0,548.0 659.0,547.0 660.1,548.5 661.1,547.5 662.1,548.0 663.1,548.0 664.1,548.0 665.1,548.0 666.1,547.0 667.1,547.0 668.1,549.0 669.1,548.0 670.2,547.5 671.2,548.0 672.2,548.5 673.2,548.0 674.2,547.5 675.2,548.0 676.2,548.0 677.2,549.0 678.2,548.0 679.3,547.0 680.3,549.0 681.3,548.0 682.3,547.5 683.3,549.0 684.3,548.0 685.3,547.0 686.3,548.0 687.3,547.0 688.4,548.0 689.4,547.0 690.4,547.0 691.4,548.0 692.4,547.5 693.4,549.0 694.4,547.0 695.4,548.5 696.4,548.0 697.4,548.0 698.5,548.0 699.5,548.0 700.5,548.5 701.5,547.0 702.5,548.0 703.5,549.0 704.5,549.0 705.5,549.0 706.5,548.0 707.6,548.0 708.6,548.0 709.6,547.0 710.6,549.0 711.6,548.5 712.6,549.0 713.6,547.0 714.6,547.0 715.6,547.5 716.6,547.0 717.7,548.0 718.7,549.0 719.7,548.0 720.7,548.0 721.7,548.0 722.8,548.7 723.8,549.3 724.9,549.5 725.9,550.7 727.0,550.8 728.0,551.0 729.0,552.8 730.1,551.6 731.1,552.3 732.2,550.6 733.2,551.4 734.2,550.2 735.3,550.4 736.3,550.2 737.4,550.0 738.4,549.8 739.4,550.1 740.5,548.3 741.5,549.6 742.5,548.4 743.6,548.7 744.6,547.9 745.7,547.7 746.7,548.0 747.7,547.5 748.8,550.0 749.8,548.5 750.9,550.0 751.9,551.0 752.9,551.5 754.0,551.5 755.0,551.5 756.0,551.9 757.1,550.8 758.1,550.7 759.2,551.6 760.2,551.9 761.2,550.3 762.3,550.7 763.3,550.1 764.4,551.0 765.4,550.9 766.5,551.8 767.5,550.7 768.5,550.1 769.6,549.9 770.6,549.8 771.7,550.2 772.7,550.1 773.8,550.0"/>
</svg>
<div class="ml" style="left:79px;top:110px;color:#600000">Y1</div>
<div class="ml" style="left:36px;top:122px;width:50px;text-align:right;color:#600000">-50.0</div>
<div class="ml" style="left:36px;top:189.9px;width:50px;text-align:right;color:#600000">-55.0</div>
<div class="ml" style="left:36px;top:257.8px;width:50px;text-align:right;color:#600000">-60.0</div>
<div class="ml" style="left:36px;top:325.7px;width:50px;text-align:right;color:#600000">-65.0</div>
<div class="ml" style="left:36px;top:393.6px;width:50px;text-align:right;color:#600000">-70.0</div>
<div class="ml" style="left:36px;top:461.5px;width:50px;text-align:right;color:#600000">-75.0</div>
<div class="ml" style="left:36px;top:529.4px;width:50px;text-align:right;color:#600000">-80.0</div>
<div class="ml" style="left:36px;top:597.3px;width:50px;text-align:right;color:#600000">-85.0</div>
<div class="ml" style="left:36px;top:665.2px;width:50px;text-align:right;color:#600000">-90.0</div>
<div class="ml" style="left:36px;top:733.1px;width:50px;text-align:right;color:#600000">-95.0</div>
<div class="ml" style="left:36px;top:801px;width:50px;text-align:right;color:#600000">-100.0</div>

<div class="ml" style="left:99px;top:830px">2026/04/15
8:58:20.5</div>
<div class="ml" style="left:212px;top:830px">2026/04/15
11:06:44.0</div>
<div class="ml" style="left:325px;top:830px">2026/04/15
13:15:07.5</div>
<div class="ml" style="left:438px;top:830px">2026/04/15
15:23:31.0</div>
<div class="ml" style="left:552px;top:830px">2026/04/15
17:31:54.5</div>
<div class="ml" style="left:665px;top:830px">2026/04/15
19:40:18.0</div>
<div class="ml" style="left:778px;top:830px">2026/04/15
21:48:41.5</div>

<!-- legend -->
<div style="left:31px;top:875px;width:136px;height:39px;background:#fff"></div><div class="ml" style="left:32px;top:878px;color:#800000">Comp-low
CH1 [℃]
-----</div>
<div style="left:168px;top:875px;width:136px;height:39px;background:#fff"></div><div class="ml" style="left:169px;top:878px;color:#989818">Comp-High
CH2 [℃]
-----</div>
<div style="left:305px;top:875px;width:136px;height:39px;background:#fff"></div><div class="ml" style="left:306px;top:878px;color:#1E78C8">MDF-330-2(-50)
CH3 [℃]
-65.7</div>
<div style="left:442px;top:875px;width:136px;height:39px;background:#fff"></div><div class="ml" style="left:443px;top:878px;color:#30C030">
CH4 []
-----</div>
<div style="left:579px;top:875px;width:136px;height:39px;background:#fff"></div><div class="ml" style="left:580px;top:878px;color:#000">MDF-190
CH5 [℃]
-62.1</div>
<div style="left:716px;top:875px;width:136px;height:39px;background:#fff"></div><div class="ml" style="left:717px;top:878px;color:#D00000">2110Temp
CH6 [mV]
-81.3</div>

<!-- alarm panel -->
<div class="thin face" style="left:23px;top:933px;width:839px;height:40px"></div>
<div class="rz" style="left:31px;top:941px;width:81px;height:25px"></div><div class="t" style="left:39px;top:945px;font-size:15px;transform:scaleX(1.1);transform-origin:0 0">ｱﾗｰﾑﾘｾｯﾄ</div>
<div class="sunk" style="left:119px;top:941px;width:733px;height:25px;background:#fff"></div>
<div class="rz" style="left:835px;top:943px;width:15px;height:21px"><svg style="left:0;top:0" width="15" height="21"><path d="M4 9 H11 L7.5 13 Z" fill="#000"/></svg></div>

<!-- status bar -->
<div class="sk" style="left:15px;top:987px;width:150px;height:20px"></div>
<div class="t" style="left:17px;top:991px;transform:scaleX(0.79);transform-origin:0 0">保存ウェイト！！</div>
<div class="sk" style="left:167px;top:987px;width:703px;height:20px"></div>
<svg style="left:856px;top:994px" width="13" height="13"><path d="M12 1 L1 12 M12 5 L5 12 M12 9 L9 12" stroke="#fff"/><path d="M12 2 L2 12 M12 6 L6 12 M12 10 L10 12" stroke="#808080"/></svg>

<!-- taskbar -->
<div style="left:0;top:1020px;width:1680px;height:30px;background:#D4D0C8;box-shadow:inset 0 1px #D4D0C8,inset 0 2px #fff"></div>
<div class="rz" style="left:2px;top:1024px;width:62px;height:22px"></div>
<svg style="left:5px;top:1027px" width="16" height="16" viewBox="0 0 16 16"><path d="M2 3 Q4 1 7 2 L6 7 Q4 6 1 7 Z" fill="#e04020"/><path d="M8 2 Q11 1 14 3 L13 8 Q11 7 7 7 Z" fill="#30a030"/><path d="M1 8 Q4 7 6 8 L5 13 Q3 12 0 13 Z" fill="#2050d0"/><path d="M7 8 Q10 8 13 9 L12 14 Q9 13 6 13 Z" fill="#f0c020"/></svg>
<div class="t" style="left:22px;top:1029px;font-weight:bold;font-size:12px;text-shadow:0.7px 0 #000;transform:scaleX(0.79);transform-origin:0 0">スタート</div>
<!-- quick launch -->
<svg style="left:71px;top:1027px" width="18" height="18" viewBox="0 0 18 18"><circle cx="9" cy="10" r="6" fill="#3a8ad8"/><circle cx="9" cy="10" r="3" fill="#fff"/><rect x="6" y="10" width="7" height="2" fill="#3a8ad8"/><path d="M2 15 Q8 2 17 3" stroke="#2a6ab8" stroke-width="1.5" fill="none"/></svg>
<svg style="left:94px;top:1027px" width="18" height="18" viewBox="0 0 18 18"><rect x="2" y="3" width="13" height="13" rx="2" fill="#2a7ad0"/><rect x="4" y="5" width="9" height="9" fill="#d8e8f8"/><path d="M6 12 L12 6 M9 6h3v3" stroke="#2a5ab0" stroke-width="1.5" fill="none"/></svg>
<svg style="left:116px;top:1027px" width="18" height="18" viewBox="0 0 18 18"><path d="M1 5 h6 l2 2 h8 v9 h-16 z" fill="#e8c870" stroke="#a08030"/><circle cx="10" cy="11" r="3" fill="#c8e0f0" stroke="#606060"/></svg>
<!-- task buttons -->
<div class="rz" style="left:142px;top:1024px;width:160px;height:22px"></div>
<svg style="left:146px;top:1028px" width="16" height="14"><rect width="16" height="14" fill="#101830"/><text x="2" y="10" font-size="7" fill="#fff" font-family="Liberation Sans" font-weight="bold">C:\</text></svg>
<div class="t" style="left:165px;top:1029px;transform:scaleX(0.84);transform-origin:0 0">transfile.cmd へのショート...</div>
<div class="rz" style="left:305px;top:1024px;width:160px;height:22px"></div>
<svg style="left:309px;top:1027px" width="16" height="16" viewBox="0 0 16 16"><path d="M1 2 L8 10 L4 14 Z" fill="#d04060"/><rect x="7" y="3" width="8" height="10" fill="#a0b8d0" stroke="#404040"/><path d="M2 12 Q8 16 14 13" stroke="#c02020" fill="none"/></svg>
<div class="t" style="left:328px;top:1029px;transform:scaleX(0.92);transform-origin:0 0">PhotoImpression 2000</div>
<div style="left:468px;top:1024px;width:160px;height:22px;background-color:#e8e6e2;background-image:repeating-conic-gradient(#fff 0 25%,#D4D0C8 0 50%);background-size:2px 2px;box-shadow:inset 1px 1px #404040,inset -1px -1px #fff,inset 2px 2px #808080"></div>
<svg style="left:473px;top:1028px" width="16" height="16" viewBox="0 0 16 16"><rect x="0" y="0" width="16" height="16" fill="#1a1a3a"/><rect x="1" y="1" width="14" height="7" fill="#e8e8f0"/><path d="M1 4 L5 3 L9 4 L14 2" stroke="#c03080" fill="none"/><rect x="1" y="9" width="14" height="6" fill="#d8d8d8"/><rect x="2" y="11" width="3" height="3" fill="#e00000"/><rect x="6" y="11" width="3" height="3" fill="#0000d0"/><rect x="10" y="11" width="3" height="3" fill="#00c000"/></svg>
<div class="t" style="left:492px;top:1030px;font-weight:bold;text-shadow:0.7px 0 #000;transform:scaleX(0.87);transform-origin:0 0">ソフトサーモ　E830</div>
<!-- tray -->
<svg style="left:1547px;top:1029px" width="13" height="14" viewBox="0 0 13 14"><rect x="0.5" y="5.5" width="12" height="7" fill="#fff" stroke="#000"/><path d="M2 8h9M2 10h9" stroke="#000" stroke-dasharray="1 1"/><path d="M5 5 V2 h5" stroke="#000" fill="none"/></svg>
<div class="sk" style="left:1564px;top:1024px;width:113px;height:24px"></div>
<svg style="left:1568px;top:1028px" width="14" height="16" viewBox="0 0 14 16"><path d="M7 1 L13 3 V8 Q13 13 7 15 Q1 13 1 8 V3 Z" fill="#f0d020" stroke="#505070"/><rect x="6" y="4" width="2" height="6" fill="#000"/><rect x="6" y="11" width="2" height="2" fill="#000"/></svg>
<svg style="left:1586px;top:1028px" width="14" height="16" viewBox="0 0 14 16"><path d="M7 1 L13 3 V8 Q13 13 7 15 Q1 13 1 8 V3 Z" fill="#d02030" stroke="#505070"/><path d="M4.5 5.5 L9.5 10.5 M9.5 5.5 L4.5 10.5" stroke="#fff" stroke-width="2"/></svg>
<svg style="left:1603px;top:1027px" width="16" height="16" viewBox="0 0 16 16"><path d="M1 2 L6 1 L8 5 L4 7 Z" fill="#30b030"/><rect x="4" y="7" width="10" height="6" transform="rotate(-25 9 10)" fill="#909090" stroke="#404040"/></svg>
<svg style="left:1621px;top:1028px" width="14" height="14" viewBox="0 0 14 14"><path d="M7 1 L8.8 5.2 L13 5.5 L9.8 8.3 L10.8 12.8 L7 10.5 L3.2 12.8 L4.2 8.3 L1 5.5 L5.2 5.2 Z" fill="#f8e040" stroke="#b09020" stroke-width="0.7"/></svg>
<div class="t" style="left:1643px;top:1030px;transform:scaleX(0.86);transform-origin:0 0">21:49</div>

</body></html>
